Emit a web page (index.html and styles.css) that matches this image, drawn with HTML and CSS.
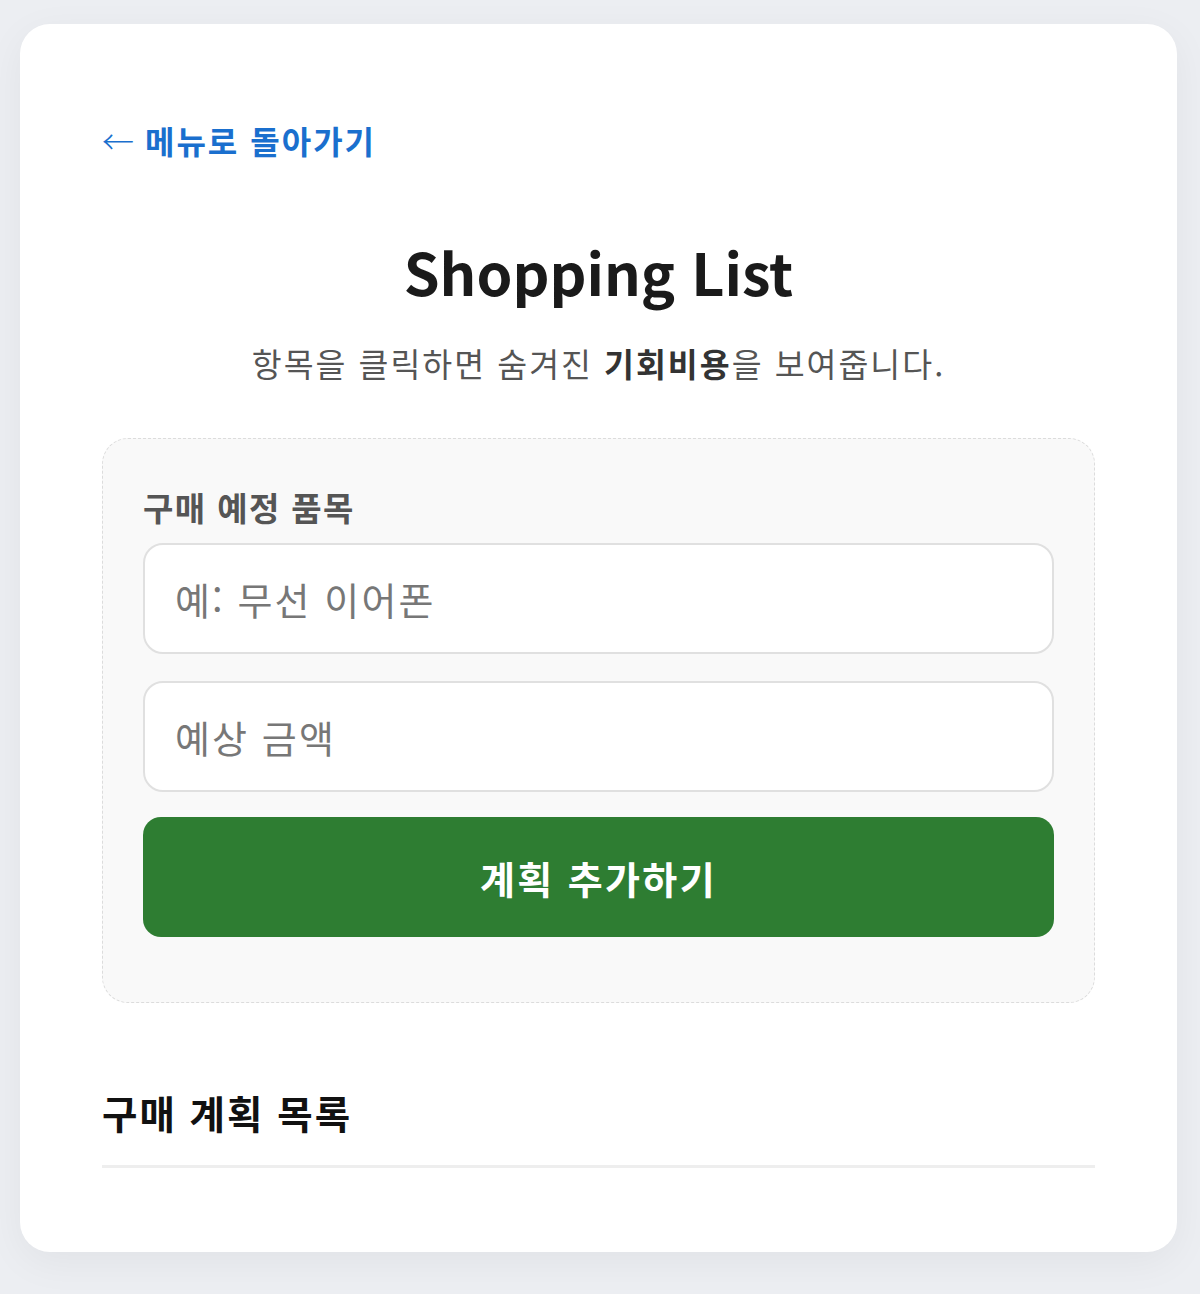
FILE: index.html
```html
<!DOCTYPE html>
<html lang="ko">
<head>
    <meta charset="UTF-8">
    <meta name="viewport" content="width=device-width, initial-scale=1.0">
    <title>Shopping List</title>
    <link rel="stylesheet" href="styles.css">
</head>
<body>
    <div class="container">
        <a href="#" class="back-link"><span class="arrow">←</span> 메뉴로 돌아가기</a>

        <h1>Shopping List</h1>
        <p class="subtitle">항목을 클릭하면 숨겨진 <strong>기회비용</strong>을 보여줍니다.</p>

        <form id="planForm" class="plan-form">
            <label for="itemName">구매 예정 품목</label>
            <input type="text" id="itemName" placeholder="예: 무선 이어폰">
            <input type="number" id="itemPrice" placeholder="예상 금액">
            <button type="submit">계획 추가하기</button>
        </form>

        <h2>구매 계획 목록</h2>
        <ul id="planList" class="plan-list"></ul>
    </div>
</body>
</html>
```

FILE: styles.css
```css
body {
    font-family: "Noto Sans CJK KR", "Noto Sans", sans-serif;
    background-color: #eceef2;
    margin: 0;
    padding: 24px 23px 42px 20px;
}
.container {
    background-color: white;
    border-radius: 30px;
    box-shadow: 0px 10px 40px rgba(0, 0, 0, 0.05);
    padding: 92px 82px 84px 82px;
}
.back-link {
    display: block;
    font-size: 32px;
    line-height: 48px;
    font-weight: 700;
    letter-spacing: 2px;
    color: #1a6fce;
    text-decoration: none;
}
.back-link .arrow {
    font-weight: 300;
    letter-spacing: 0;
}
h1 {
    font-size: 57.5px;
    line-height: 67px;
    font-weight: 700;
    color: #1a1a1a;
    text-align: center;
    margin: 74px 0 0 0;
}
.subtitle {
    font-size: 32.5px;
    line-height: 48px;
    letter-spacing: 2px;
    color: #555;
    text-align: center;
    margin: 34px 0 51px 0;
}
.subtitle strong {
    color: #333;
}
.plan-form {
    display: flex;
    flex-direction: column;
    background-color: #f9f9f9;
    border: 1px dashed #dcdcdc;
    border-radius: 26px;
    padding: 43px 40px 65px 40px;
}
label {
    font-size: 33px;
    line-height: 50px;
    font-weight: 700;
    letter-spacing: 1.4px;
    color: #555;
    margin-bottom: 11px;
}
input[type="text"],
input[type="number"] {
    font-family: inherit;
    font-size: 38px;
    letter-spacing: 2.1px;
    height: 111px;
    box-sizing: border-box;
    padding: 0 30px;
    border: 2px solid #e0e0e0;
    border-radius: 20px;
    background-color: white;
    color: #333;
    margin-bottom: 27px;
    outline: none;
}
input[type="number"] {
    margin-bottom: 25px;
    -moz-appearance: textfield;
}
input::placeholder {
    color: #777;
}
button {
    font-family: inherit;
    font-size: 38px;
    font-weight: 700;
    letter-spacing: 2.4px;
    height: 120px;
    background-color: #2e7d32;
    color: white;
    border: none;
    border-radius: 18px;
    cursor: pointer;
}
button:hover {
    background-color: #1b5e20;
}
h2 {
    font-size: 38.5px;
    line-height: 58px;
    font-weight: 700;
    letter-spacing: 2px;
    color: #111;
    margin: 80px 0 0 0;
    padding-bottom: 24px;
    border-bottom: 3px solid #eee;
}
.plan-list {
    list-style: none;
    margin: 0;
    padding: 0;
}
```
